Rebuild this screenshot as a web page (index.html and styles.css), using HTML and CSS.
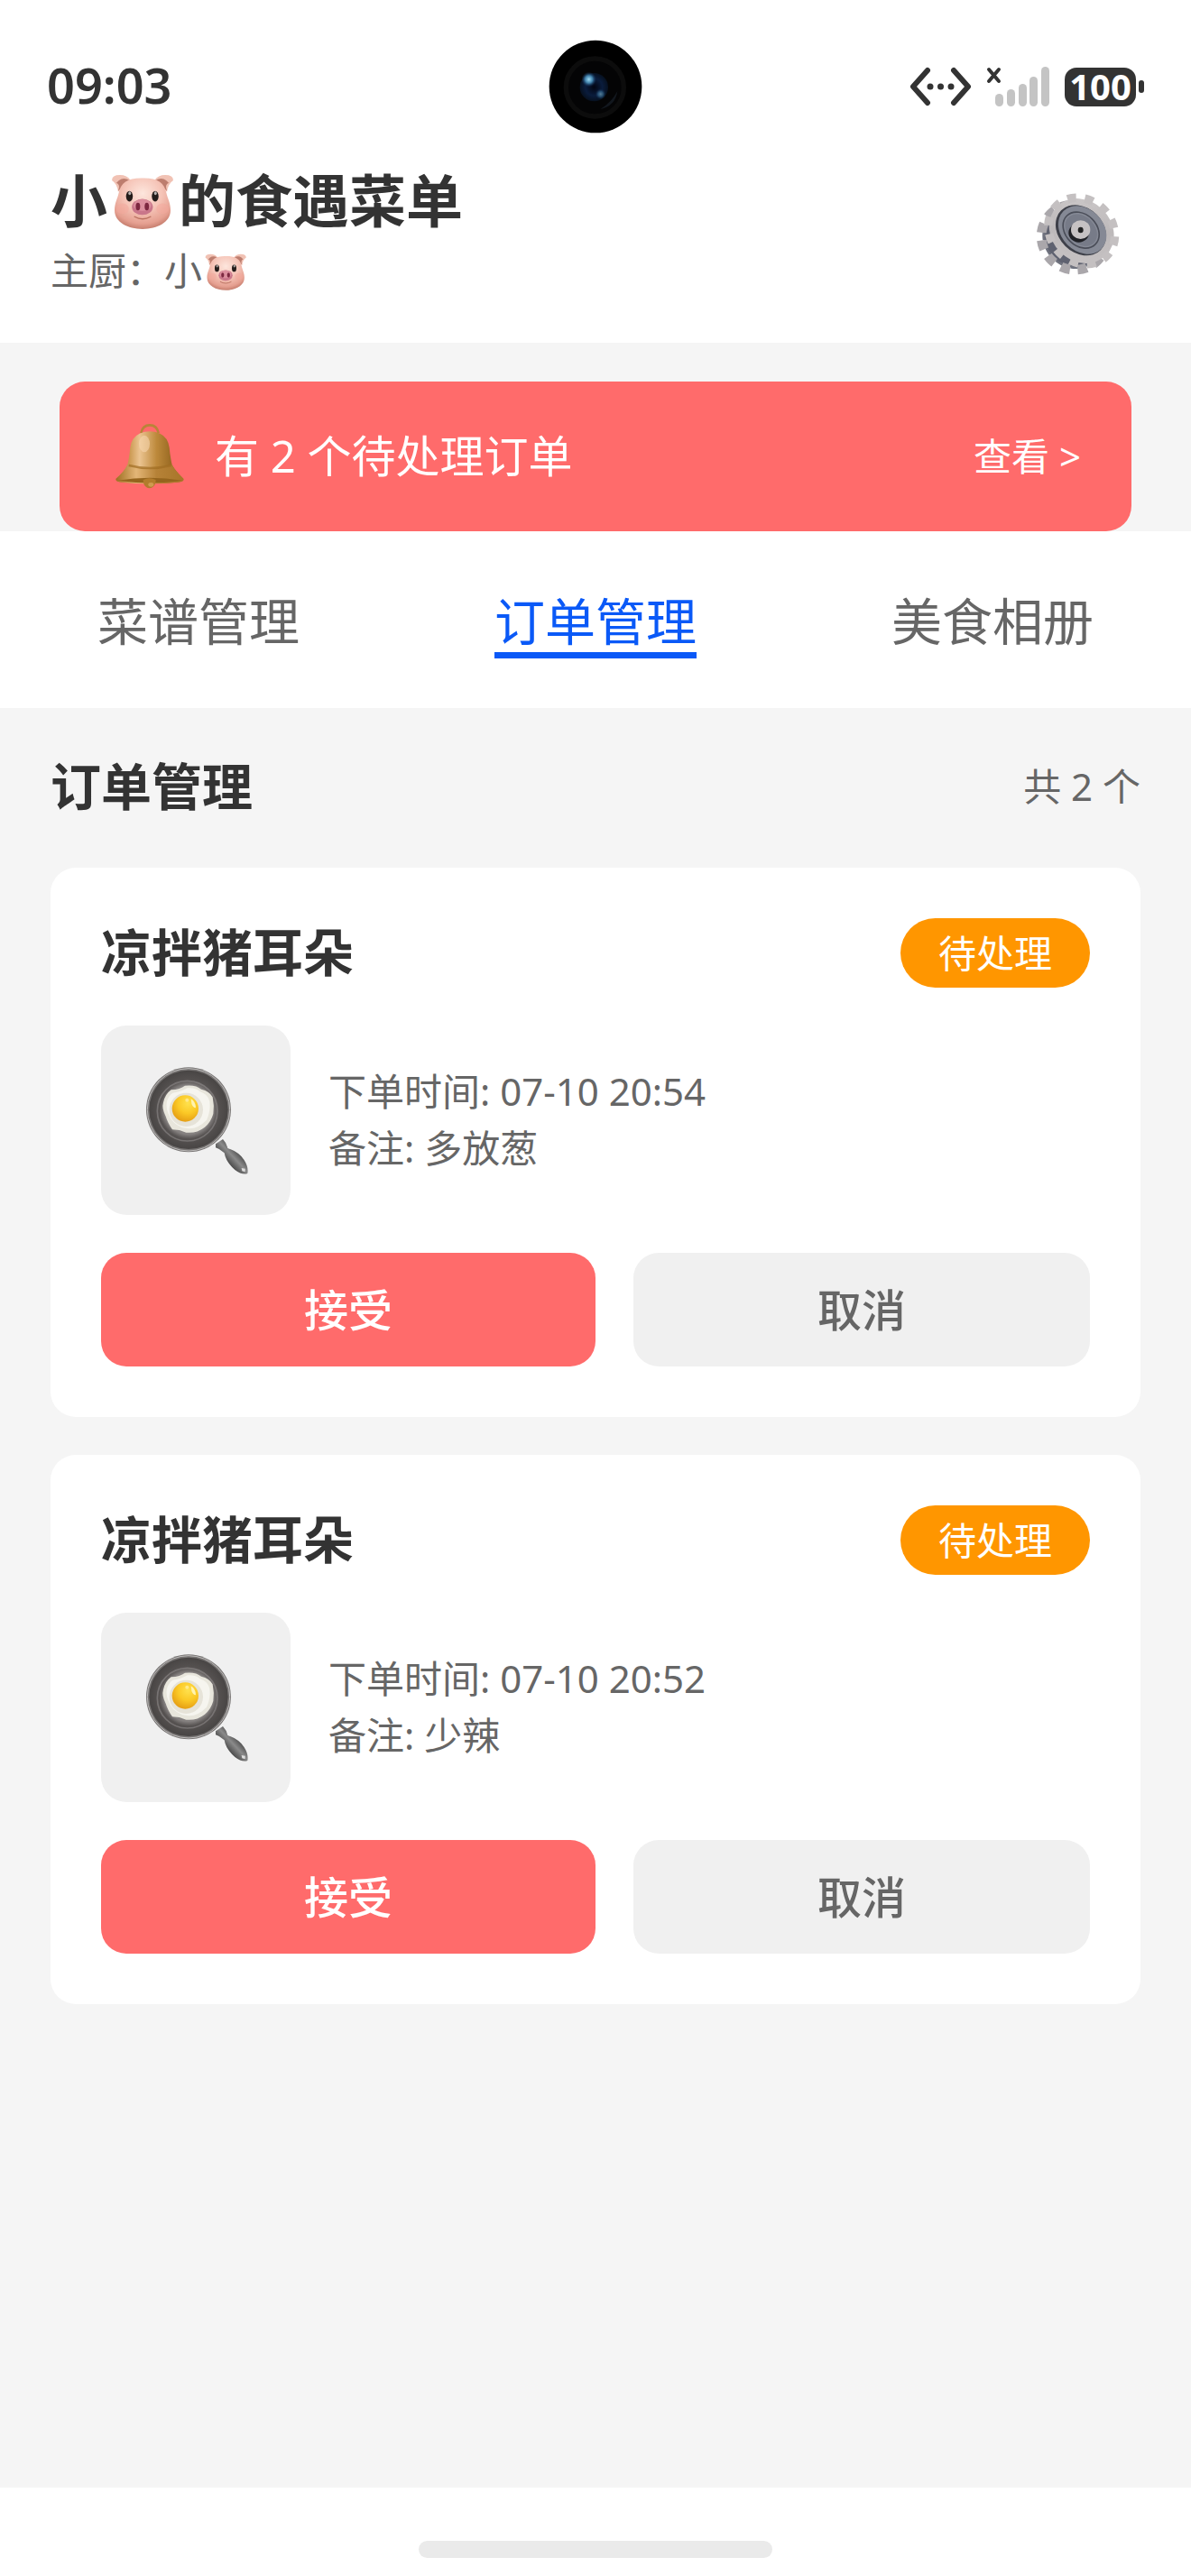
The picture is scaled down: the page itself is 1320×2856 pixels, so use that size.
FILE: index.html
```
<!DOCTYPE html>
<html lang="zh-CN">
<head>
    <meta charset="UTF-8">
    <meta name="viewport" content="width=device-width, initial-scale=1.0">
    <title>小猪的食遇菜单</title>
    <link rel="stylesheet" href="styles.css">
</head>
<body>
    <!-- 公用图标 -->
    <svg class="defs" width="0" height="0" aria-hidden="true">
        <defs>
            <radialGradient id="pig-skin" cx="0.5" cy="0.3" r="0.7">
                <stop offset="0" stop-color="#fde6dd"/>
                <stop offset="0.5" stop-color="#f5c3b6"/>
                <stop offset="0.85" stop-color="#e59f90"/>
                <stop offset="1" stop-color="#c77f6f"/>
            </radialGradient>
            <radialGradient id="pan-inside">
                <stop offset="0" stop-color="#8a8685"/>
                <stop offset="0.62" stop-color="#858180"/>
                <stop offset="0.74" stop-color="#565251"/>
                <stop offset="1" stop-color="#484544"/>
            </radialGradient>
            <linearGradient id="pan-handle" x1="1" y1="0" x2="0" y2="1">
                <stop offset="0.3" stop-color="#444"/>
                <stop offset="0.48" stop-color="#8a8a8a"/>
                <stop offset="0.65" stop-color="#4a4a4a"/>
            </linearGradient>
            <radialGradient id="yolk" cx="0.6" cy="0.3" r="0.75">
                <stop offset="0" stop-color="#ffe14d"/>
                <stop offset="0.5" stop-color="#fbc926"/>
                <stop offset="1" stop-color="#e39a12"/>
            </radialGradient>
        </defs>
        <symbol id="icon-pig" viewBox="0 0 80 64">
            <path d="M5 7 Q5 1 14 1 Q22 1 26 7 L12 20 Q11 11 5 7Z" fill="#f1c2b4"/>
            <path d="M74 7 Q74 1 65 1 Q57 1 53 7 L67 20 Q68 11 74 7Z" fill="#f1c2b4"/>
            <path d="M13 7 Q18 3 25 7 L12 19 Q15 12 10 10Z" fill="#bd7d6e"/>
            <path d="M66 7 Q61 3 54 7 L67 19 Q64 12 69 10Z" fill="#bd7d6e"/>
            <path d="M39.500 4.500 C56 4 64 10 66 20 C68 29 71 32 71 41 C71 54 56 62 39.500 62 C23 62 8 54 8 41 C8 32 11 29 13 20 C15 10 23 4 39.500 4.500Z" fill="url(#pig-skin)"/>
            <ellipse cx="17" cy="39" rx="7" ry="6" fill="#f3a79c" opacity="0.5"/>
            <ellipse cx="62" cy="39" rx="7" ry="6" fill="#f3a79c" opacity="0.5"/>
            <ellipse cx="24.700" cy="25" rx="3.800" ry="6" fill="#241d1b"/>
            <ellipse cx="53.700" cy="25" rx="3.800" ry="6" fill="#241d1b"/>
            <ellipse cx="25" cy="21.500" rx="1.500" ry="2" fill="#b9b4b2"/>
            <ellipse cx="54" cy="21.500" rx="1.500" ry="2" fill="#b9b4b2"/>
            <ellipse cx="39.300" cy="37" rx="11.800" ry="9" fill="#c9768a"/>
            <ellipse cx="39.300" cy="35" rx="10" ry="6.500" fill="#dc8f9e"/>
            <ellipse cx="34.300" cy="36.500" rx="2.500" ry="4.300" fill="#7d2840"/>
            <ellipse cx="44.300" cy="36.500" rx="2.500" ry="4.300" fill="#7d2840"/>
            <path d="M30.500 48 Q39.500 53 48.500 48" fill="none" stroke="#b9705f" stroke-width="1.400" stroke-linecap="round"/>
        </symbol>
        <symbol id="icon-pan" viewBox="142 159 360 360">
            <path d="M388 418 L412 402 Q424 414 428 432 Q464 444 482 470 Q498 494 494 516 Q476 522 452 504 Q422 478 417 448 Q402 434 388 430Z" fill="url(#pan-handle)"/>
            <path d="M474 498 L486 500 L486 511 L476 508Z" fill="#ddd"/>
            <circle cx="298" cy="304" r="141" fill="#777473"/>
            <circle cx="298" cy="304" r="137" fill="none" stroke="#bdbbba" stroke-width="3"/>
            <circle cx="298" cy="304" r="131" fill="url(#pan-inside)"/>
            <circle cx="294" cy="308" r="100" fill="none" stroke="#9a9695" stroke-width="5" opacity="0.5"/>
            <path d="M240 238 Q270 236 286 224 Q322 220 340 236 Q368 242 378 262 Q384 290 380 318 Q372 346 352 362 Q324 384 290 380 Q268 370 244 370 Q228 346 222 326 Q208 300 214 280 Q220 252 240 238Z" fill="#e8e6dc"/>
            <path d="M246 248 Q276 244 294 232 Q322 230 336 244 Q362 252 368 276 Q372 310 358 338 Q328 370 292 366 Q254 360 238 332 Q220 300 226 276 Q232 256 246 248Z" fill="#f6f5ef"/>
            <circle cx="290" cy="304" r="56" fill="#dfdccf" opacity="0.7"/>
            <circle cx="287" cy="300" r="44" fill="url(#yolk)"/>
            <path d="M306 268 Q322 278 322 298 Q312 296 308 284Z" fill="#fff3b0"/>
            <circle cx="293" cy="272" r="6" fill="#ffe98a"/>
        </symbol>
    </svg>

    <div class="status-bar">
        <span class="clock">09:03</span>
        <svg class="camera" viewBox="53 41 312 312" aria-hidden="true">
            <defs>
                <radialGradient id="lens" cx="0.5" cy="0.5" r="0.5">
                    <stop offset="0" stop-color="#020512"/>
                    <stop offset="0.6" stop-color="#0a1c3c"/>
                    <stop offset="1" stop-color="#06101f"/>
                </radialGradient>
                <radialGradient id="glint">
                    <stop offset="0" stop-color="#9fdcf5"/>
                    <stop offset="0.5" stop-color="#3f7fa8"/>
                    <stop offset="1" stop-color="#12305a" stop-opacity="0"/>
                </radialGradient>
            </defs>
            <circle cx="209" cy="197" r="154" fill="#000"/>
            <circle cx="207" cy="200" r="96" fill="#040405" stroke="#0c0c0c" stroke-width="16"/>
            <path d="M225 272 Q275 262 282 212 Q262 250 225 272Z" fill="#12171e"/>
            <circle cx="204" cy="199" r="47" fill="url(#lens)"/>
            <circle cx="187" cy="173" r="25" fill="url(#glint)"/>
            <circle cx="226" cy="222" r="18" fill="url(#glint)" opacity="0.5"/>
        </svg>
        <div class="status-icons">
            <svg width="69" height="44" viewBox="0 0 69 44" aria-hidden="true">
                <g fill="none" stroke="#333" stroke-width="6" stroke-linecap="round" stroke-linejoin="round">
                    <path d="M20 4 L4 22 L20 40"/>
                    <path d="M49 4 L65 22 L49 40"/>
                </g>
                <g fill="#333">
                    <circle cx="23" cy="22" r="3.500"/>
                    <circle cx="34.500" cy="22" r="3.500"/>
                    <circle cx="46" cy="22" r="3.500"/>
                </g>
            </svg>
            <svg width="71" height="44" viewBox="0 0 71 44" aria-hidden="true">
                <path d="M3 3 L14 16 M14 3 L3 16" stroke="#333" stroke-width="4" stroke-linecap="round"/>
                <g fill="#c4c4c4">
                    <rect x="10" y="30" width="9" height="14" rx="4.500"/>
                    <rect x="23" y="25" width="9" height="19" rx="4.500"/>
                    <rect x="36" y="19" width="9" height="25" rx="4.500"/>
                    <rect x="48" y="11" width="9" height="33" rx="4.500"/>
                    <rect x="61" y="0" width="9" height="44" rx="4.500"/>
                </g>
            </svg>
            <div class="battery">
                <span class="battery-level">100</span>
                <span class="battery-tip"></span>
            </div>
        </div>
    </div>

    <header class="header">
        <div class="header-info">
            <h1 class="title">小<svg class="pig" role="img" aria-label="猪"><use href="#icon-pig"/></svg>的食遇菜单</h1>
            <p class="chef">主厨：小<svg class="pig-small" role="img" aria-label="猪"><use href="#icon-pig"/></svg></p>
        </div>
        <button class="settings-btn" aria-label="设置">
            <svg width="112" height="112" viewBox="54 24 336 336" aria-hidden="true">
                <defs>
                    <linearGradient id="gear-face" x1="0" y1="0" x2="1" y2="1">
                        <stop offset="0" stop-color="#cfcbcc"/>
                        <stop offset="0.5" stop-color="#bdb9ba"/>
                        <stop offset="1" stop-color="#c9c5c6"/>
                    </linearGradient>
                </defs>
                <!-- 齿轮背面 -->
                <g transform="rotate(45 211 219)">
                    <ellipse cx="211" cy="219" rx="104" ry="98" fill="#5f6270"/>
                    <ellipse cx="211" cy="219" rx="110" ry="107" fill="none" stroke="#aaa7ab" stroke-width="32" pathLength="24" stroke-dasharray="1.100 0.900" stroke-dashoffset="0.500"/>
                    <ellipse cx="211" cy="219" rx="104" ry="98" fill="none" stroke="#6f727e" stroke-width="8" pathLength="24" stroke-dasharray="0.900 1.100" stroke-dashoffset="1.400"/>
                </g>
                <!-- 齿轮正面 -->
                <g transform="rotate(45 236 198)">
                    <ellipse cx="236" cy="198" rx="115" ry="100" fill="url(#gear-face)"/>
                    <ellipse cx="236" cy="198" rx="118" ry="103" fill="none" stroke="#c4c0c1" stroke-width="28" pathLength="24" stroke-dasharray="1 1" stroke-dashoffset="0.500"/>
                    <ellipse cx="233" cy="198" rx="93" ry="74" fill="#3e4049"/>
                    <ellipse cx="236" cy="194" rx="89" ry="70" fill="#858995"/>
                    <ellipse cx="233" cy="197" rx="67" ry="52" fill="none" stroke="#4b4e59" stroke-width="5"/>
                    <ellipse cx="233" cy="197" rx="60" ry="45" fill="#777b88"/>
                </g>
                <ellipse cx="227" cy="204" rx="34" ry="32" fill="#202126"/>
                <ellipse cx="233" cy="194" rx="32" ry="31" fill="#c6c2c3"/>
                <ellipse cx="233" cy="195" rx="9" ry="10" fill="#222"/>
            </svg>
        </button>
    </header>

    <div class="notice">
        <svg class="bell" viewBox="36 36 264 264" aria-hidden="true">
            <defs>
                <linearGradient id="bell-body" x1="0" y1="0" x2="1" y2="0">
                    <stop offset="0" stop-color="#b07a2c"/>
                    <stop offset="0.2" stop-color="#cb9850"/>
                    <stop offset="0.35" stop-color="#ebc491"/>
                    <stop offset="0.6" stop-color="#bd893b"/>
                    <stop offset="0.85" stop-color="#94651f"/>
                    <stop offset="1" stop-color="#b37f34"/>
                </linearGradient>
                <linearGradient id="bell-rim" x1="0" y1="0" x2="1" y2="0">
                    <stop offset="0" stop-color="#a06f22"/>
                    <stop offset="0.3" stop-color="#e3b677"/>
                    <stop offset="0.6" stop-color="#b68237"/>
                    <stop offset="1" stop-color="#a87529"/>
                </linearGradient>
            </defs>
            <path d="M139 90 Q144 64 168 64 Q192 64 197 90" fill="none" stroke="#b98439" stroke-width="8"/>
            <path d="M134 92 Q168 78 202 92 Q228 104 233 138 Q236 170 242 196 Q252 216 280 242 Q284 252 260 254 Q168 264 76 254 Q52 252 56 242 Q84 218 94 196 Q100 172 103 138 Q108 104 134 92Z" fill="url(#bell-body)"/>
            <path d="M94 196 Q168 220 242 196 Q252 216 280 242 Q284 252 260 254 Q168 264 76 254 Q52 252 56 242 Q84 218 94 196Z" fill="url(#bell-rim)"/>
            <path d="M98 198 Q168 216 240 198" fill="none" stroke="#a06c22" stroke-width="7" opacity="0.7"/>
            <ellipse cx="150" cy="126" rx="18" ry="28" fill="#f6d6ae" opacity="0.6"/>
            <path d="M62 248 Q168 230 276 248 Q168 264 62 248Z" fill="#94641d"/>
            <path d="M146 246 Q166 236 188 246 Q188 262 178 270 Q167 278 156 270 Q146 262 146 246Z" fill="#b27c2c"/>
            <ellipse cx="172" cy="262" rx="9" ry="7" fill="#cf9b50"/>
        </svg>
        <span class="notice-text">有 2 个待处理订单</span>
        <a class="notice-link" href="#orders">查看 &gt;</a>
    </div>

    <nav class="tabs">
        <button class="tab">菜谱管理</button>
        <button class="tab active">订单管理</button>
        <button class="tab">美食相册</button>
    </nav>

    <main class="orders" id="orders">
        <div class="orders-header">
            <h2 class="orders-title">订单管理</h2>
            <span class="orders-count">共 2 个</span>
        </div>

        <section class="order-card">
            <div class="order-top">
                <h3 class="dish">凉拌猪耳朵</h3>
                <span class="tag">待处理</span>
            </div>
            <div class="order-body">
                <div class="thumb">
                    <svg width="120" height="120" aria-hidden="true"><use href="#icon-pan"/></svg>
                </div>
                <div class="order-info">
                    <p>下单时间: 07-10 20:54</p>
                    <p>备注: 多放葱</p>
                </div>
            </div>
            <div class="order-actions">
                <button class="btn btn-accept">接受</button>
                <button class="btn btn-cancel">取消</button>
            </div>
        </section>

        <section class="order-card">
            <div class="order-top">
                <h3 class="dish">凉拌猪耳朵</h3>
                <span class="tag">待处理</span>
            </div>
            <div class="order-body">
                <div class="thumb">
                    <svg width="120" height="120" aria-hidden="true"><use href="#icon-pan"/></svg>
                </div>
                <div class="order-info">
                    <p>下单时间: 07-10 20:52</p>
                    <p>备注: 少辣</p>
                </div>
            </div>
            <div class="order-actions">
                <button class="btn btn-accept">接受</button>
                <button class="btn btn-cancel">取消</button>
            </div>
        </section>
    </main>

    <footer class="nav-area">
        <div class="home-bar"></div>
    </footer>
</body>
</html>
```

FILE: styles.css
```
* {
    box-sizing: border-box;
    margin: 0;
    padding: 0;
}
body {
    display: flex;
    flex-direction: column;
    min-height: 100vh;
    background-color: #f5f5f5;
    color: #333;
    font-family: "Noto Sans", "Noto Sans CJK SC", sans-serif;
    font-size: 42px;
    line-height: 49px;
}
button {
    border: none;
    background: none;
    font-family: inherit;
    cursor: pointer;
}
svg {
    display: block;
}
.defs {
    position: absolute;
}

/* 状态栏 */
.status-bar {
    display: grid;
    grid-template-columns: 1fr auto 1fr;
    align-items: center;
    padding: 44px 52px 36px;
    background-color: #fff;
}
.clock {
    padding-bottom: 4px;
    font-size: 54px;
    font-weight: 600;
}
.camera {
    width: 104px;
    height: 104px;
}
.status-icons {
    display: flex;
    justify-content: flex-end;
    align-items: center;
    gap: 16px;
}
.battery {
    display: flex;
    align-items: center;
    gap: 3px;
}
.battery-level {
    width: 79px;
    height: 43px;
    border-radius: 13px;
    background-color: #333;
    color: #fff;
    font-size: 40px;
    font-weight: 700;
    line-height: 42px;
    text-align: center;
}
.battery-tip {
    width: 6px;
    height: 14px;
    border-radius: 3px;
    background-color: #333;
}

/* 头部 */
.header {
    display: flex;
    justify-content: space-between;
    align-items: center;
    padding: 0 56px 56px;
    background-color: #fff;
}
.title {
    font-size: 63px;
    font-weight: 700;
    line-height: 74px;
    margin-bottom: 16px;
}
.chef {
    color: #666;
}
.pig,
.pig-small {
    display: inline-block;
    width: 79px;
    height: 63px;
    vertical-align: -10px;
}
.pig-small {
    width: 53px;
    height: 42px;
    vertical-align: -7px;
}
.settings-btn {
    display: flex;
    justify-content: center;
    align-items: center;
    width: 140px;
    height: 140px;
}

/* 订单提醒 */
.notice {
    display: flex;
    align-items: center;
    width: 90%;
    margin: 43px auto 0;
    padding: 39px 56px;
    border-radius: 28px;
    background-color: #ff6b6b;
    color: #fff;
}
.bell {
    width: 88px;
    height: 88px;
    margin-right: 28px;
}
.notice-text {
    flex: 1;
    padding-bottom: 2px;
    font-size: 49px;
}
.notice-link {
    padding-bottom: 2px;
    color: #fff;
    text-decoration: none;
}

/* 标签页 */
.tabs {
    display: flex;
    padding: 65px 0 55px;
    background-color: #fff;
}
.tab {
    flex: 1;
    color: #666;
    font-size: 56px;
    line-height: 69px;
}
.tab::after {
    content: "";
    display: block;
    width: 224px;
    height: 7px;
    margin: 0 auto;
}
.tab.active {
    color: #0a59f7;
}
.tab.active::after {
    background-color: #0a59f7;
}

/* 订单列表 */
.orders {
    flex: 1;
    padding: 0 56px 42px;
}
.orders-header {
    display: flex;
    justify-content: space-between;
    align-items: center;
    padding: 53px 0 58px;
}
.orders-title {
    font-size: 56px;
    font-weight: 600;
    line-height: 66px;
}
.orders-count {
    color: #666;
}
.order-card {
    padding: 56px;
    border-radius: 28px;
    background-color: #fff;
}
.order-card + .order-card {
    margin-top: 42px;
}
.order-top {
    display: flex;
    justify-content: space-between;
    align-items: center;
}
.dish {
    padding-bottom: 4px;
    font-size: 56px;
    font-weight: 700;
    line-height: 66px;
}
.tag {
    padding: 14px 42px;
    border-radius: 42px;
    background-color: #ff9600;
    color: #fff;
}
.order-body {
    display: flex;
    align-items: center;
    gap: 42px;
    margin: 42px 0;
}
.thumb {
    display: flex;
    justify-content: center;
    align-items: center;
    width: 210px;
    height: 210px;
    border-radius: 28px;
    background-color: #f0f0f0;
}
.order-info {
    padding-bottom: 2px;
    color: #666;
}
.order-info p + p {
    margin-top: 14px;
}
.order-actions {
    display: flex;
    gap: 42px;
}
.btn {
    height: 126px;
    padding-bottom: 6px;
    border-radius: 28px;
    font-size: 49px;
    font-weight: 500;
}
.btn-accept {
    flex: 52;
    background-color: #ff6b6b;
    color: #fff;
}
.btn-cancel {
    flex: 48;
    background-color: #f0f0f0;
    color: #666;
}

/* 底部手势条 */
.nav-area {
    display: flex;
    justify-content: center;
    padding: 59px 0 20px;
    background-color: #fff;
}
.home-bar {
    width: 392px;
    height: 19px;
    border-radius: 10px;
    background-color: #eaeaea;
}
```
